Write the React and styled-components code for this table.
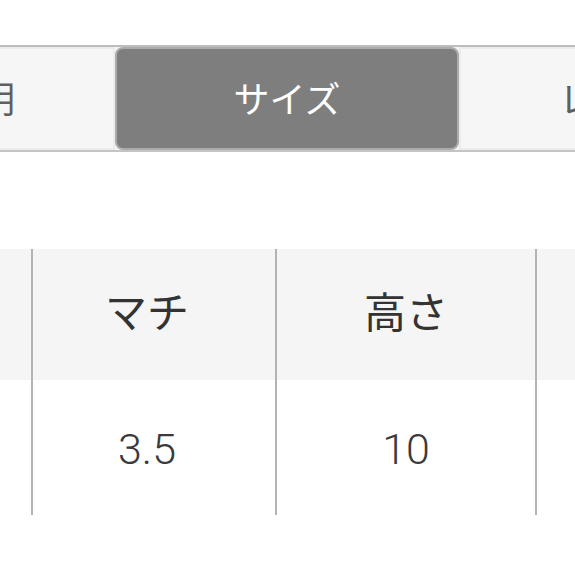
import React from "react";
import styled, { createGlobalStyle } from "styled-components";

const Global = createGlobalStyle`
  html, body { margin: 0; padding: 0; background: #ffffff; overflow: hidden; }
  body { font-family: Roboto, "Noto Sans CJK JP", sans-serif; }
`;

const Page = styled.div`
  width: 575px;
  height: 575px;
  overflow: hidden;
  padding-top: 45px;
  box-sizing: border-box;
`;

const TabBar = styled.div`
  display: flex;
  margin-left: -229px;
  width: 1100px;
  height: 107px;
  box-sizing: border-box;
  border-top: 2px solid #bdbdbd;
  border-bottom: 2px solid #c4c4c4;
  background: #f4f4f4;
`;

const Tab = styled.div`
  flex: 0 0 344px;
  display: flex;
  align-items: center;
  justify-content: center;
  box-sizing: border-box;
  font-family: "Noto Sans CJK JP", sans-serif;
  font-size: 36px;
  color: ${(p) => (p.$active ? "#ffffff" : "#5f5f5f")};
  background: ${(p) => (p.$active ? "#7e7e7e" : "#f6f6f6")};
  border: 2px solid ${(p) => (p.$active ? "#ababab" : "#ececec")};
  border-radius: ${(p) => (p.$active ? "8px" : "0")};
  padding-bottom: 4px;
`;

const Table = styled.div`
  margin-top: 97px;
  display: grid;
  grid-template-columns: 33px 244px 260px 1fr;
  grid-template-rows: 131px 135px;
`;

const Cell = styled.div`
  display: flex;
  align-items: center;
  justify-content: center;
  box-sizing: border-box;
  border-right: ${(p) => (p.$last ? "none" : "2px solid #b3b3b3")};
  padding-right: ${(p) => p.$shift || 0}px;
`;

const HeadCell = styled(Cell)`
  background: #f5f5f5;
  font-family: "Noto Sans CJK JP", sans-serif;
  font-size: 42px;
  color: #333333;
  padding-bottom: 10px;
`;

const BodyCell = styled(Cell)`
  background: #ffffff;
  font-family: Roboto, sans-serif;
  font-weight: 300;
  font-size: 43px;
  color: #3a3a3a;
  padding-top: 2px;
`;

export default function App() {
  return (
    <Page>
      <Global />
      <TabBar>
        <Tab>商品説明</Tab>
        <Tab $active>サイズ</Tab>
        <Tab>レビュー</Tab>
      </TabBar>
      <Table>
        <HeadCell />
        <HeadCell $shift={14}>マチ</HeadCell>
        <HeadCell>高さ</HeadCell>
        <HeadCell $last />
        <BodyCell />
        <BodyCell $shift={14}>3.5</BodyCell>
        <BodyCell>10</BodyCell>
        <BodyCell $last />
      </Table>
    </Page>
  );
}
